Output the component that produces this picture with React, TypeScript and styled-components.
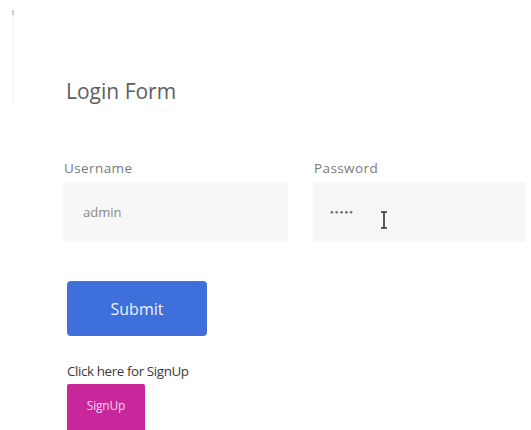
import styled, { createGlobalStyle } from "styled-components";

const GlobalStyle = createGlobalStyle`
  html, body {
    margin: 0;
    padding: 0;
    background: #ffffff;
    font-family: "Open Sans", "Liberation Sans", sans-serif;
  }
`;

const Page = styled.div`
  width: 531px;
  height: 430px;
  overflow: hidden;
  position: relative;
  box-sizing: border-box;
  padding: 77px 0 0 63px;
`;

const EdgeLine = styled.div`
  position: absolute;
  left: 12px;
  top: 10px;
  width: 2px;
  height: 95px;
  background: linear-gradient(#cfcfcf 0 5px, #f6f6f6 5px);
`;

const Title = styled.h2`
  margin: 0 0 0 3px;
  font-size: 21px;
  font-weight: 400;
  color: #5e5e5e;
  line-height: 28px;
`;

const Fields = styled.div`
  display: grid;
  grid-template-columns: 225px 213px;
  column-gap: 25px;
  margin-top: 55px;
`;

const Field = styled.div`
  display: flex;
  flex-direction: column;
  gap: 6px;
  position: relative;
`;

const Label = styled.label`
  font-size: 13.5px;
  letter-spacing: 0.4px;
  color: #7a7a7a;
  line-height: 16px;
  padding-left: 1px;
`;

const Input = styled.div<{ $dots?: boolean }>`
  height: 60px;
  background: #f7f7f7;
  border-radius: 3px;
  box-sizing: border-box;
  padding-left: ${(p) => (p.$dots ? "17px" : "20px")};
  display: flex;
  align-items: center;
  font-size: ${(p) => (p.$dots ? "6px" : "13px")};
  letter-spacing: ${(p) => (p.$dots ? "1.2px" : "0")};
  color: ${(p) => (p.$dots ? "#666" : "#8a8a8a")};
`;

const Cursor = styled.svg`
  position: absolute;
  left: 67px;
  top: 51px;
`;

const SubmitButton = styled.button`
  margin: 39px 0 0 4px;
  width: 140px;
  height: 55px;
  border: none;
  border-radius: 4px;
  background: #3e6fda;
  color: #eef3ff;
  font-family: inherit;
  font-size: 16px;
`;

const Hint = styled.p`
  margin: 27px 0 0 4px;
  font-size: 13.4px;
  color: #3a3a3a;
  line-height: 16px;
  letter-spacing: -0.4px;
`;

const SignUpButton = styled.button`
  display: block;
  margin: 5px 0 0 4px;
  width: 78px;
  height: 48px;
  border: none;
  border-radius: 2px;
  background: #c7279a;
  color: #f6d9ee;
  font-family: inherit;
  font-size: 12px;
  letter-spacing: -0.2px;
  padding-bottom: 6px;
`;

function App() {
  return (
    <>
      <GlobalStyle />
      <Page>
        <EdgeLine />
        <Title>Login Form</Title>
        <Fields>
          <Field>
            <Label>Username</Label>
            <Input>admin</Input>
          </Field>
          <Field>
            <Label>Password</Label>
            <Input $dots>●●●●●</Input>
            <Cursor width="8" height="18" viewBox="0 0 8 18">
              <path
                d="M1 1h6M4 1v16M1 17h6"
                stroke="#333"
                strokeWidth="1.6"
                fill="none"
              />
            </Cursor>
          </Field>
        </Fields>
        <SubmitButton>Submit</SubmitButton>
        <Hint>Click here for SignUp</Hint>
        <SignUpButton>SignUp</SignUpButton>
      </Page>
    </>
  );
}

export default App;
